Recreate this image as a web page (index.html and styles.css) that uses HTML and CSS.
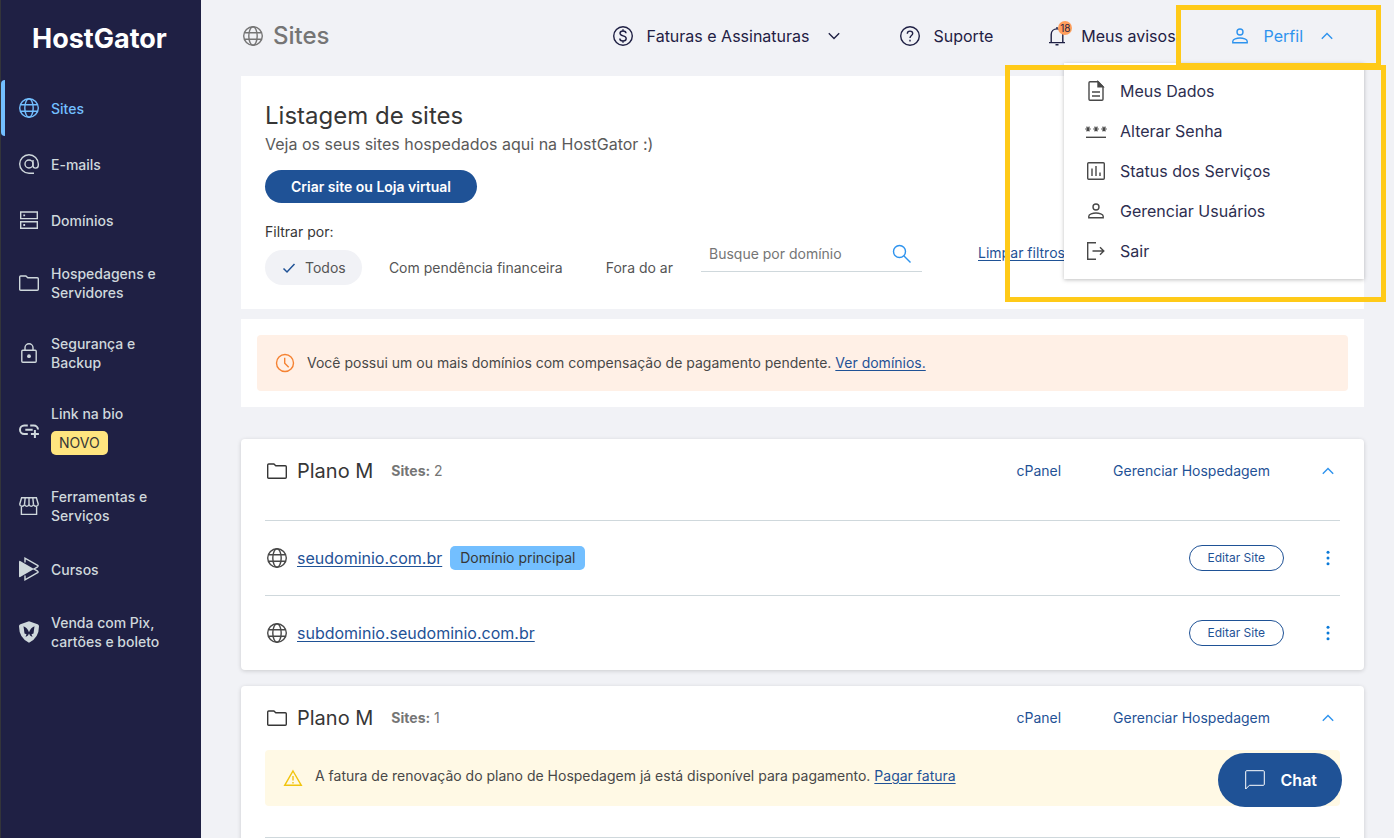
FILE: index.html
```html
<!DOCTYPE html>
<html lang="pt-BR">
<head>
<meta charset="utf-8">
<meta name="viewport" content="width=device-width, initial-scale=1">
<title>Sites - HostGator</title>
<link rel="stylesheet" href="styles.css">
</head>
<body>
<svg class="sprite" aria-hidden="true">
  <symbol id="globe" viewBox="0 0 24 24"><circle cx="12" cy="12" r="9.3"/><ellipse cx="12" cy="12" rx="4.2" ry="9.3"/><path d="M3.4 8.7h17.2M3.4 15.3h17.2"/></symbol>
  <symbol id="folder" viewBox="0 0 24 24"><path d="M3.7 5h5.2l1.900 1.800h9.500q1 0 1 1v10.500q0 .9-1 .9H3.700q-1 0-1-.9V5.900q0-.9 1-.9z"/></symbol>
  <symbol id="person" viewBox="0 0 24 24"><circle cx="12" cy="8" r="3"/><path d="M4.800 18.700v-1.400c0-2 4-3.300 7.200-3.300s7.200 1.300 7.200 3.300v1.400z"/></symbol>
  <symbol id="up" viewBox="0 0 24 24"><path d="M6.800 14.800 12 9.600l5.200 5.200"/></symbol>
  <symbol id="down" viewBox="0 0 24 24"><path d="M6.800 9.200l5.200 5.200 5.200-5.200"/></symbol>
  <symbol id="dots" viewBox="0 0 24 24"><g fill="currentColor" stroke="none"><circle cx="12" cy="6.200" r="1.500"/><circle cx="12" cy="12" r="1.500"/><circle cx="12" cy="17.800" r="1.500"/></g></symbol>
</svg>
<div class="app">
  <aside class="sidebar">
    <a class="logo" href="#">HostGator</a>
    <nav class="menu">
      <a class="menu-item active" href="#"><svg class="icon"><use href="#globe"/></svg><span>Sites</span></a>
      <a class="menu-item" href="#"><svg class="icon" viewBox="0 0 24 24"><circle cx="12" cy="12" r="4"/><path d="M16 8v5.500c0 1.700 1 2.600 2.500 2.600s2.800-1 2.800-2.800V12A9.300 9.300 0 1 0 12 21.300h5"/></svg><span>E-mails</span></a>
      <a class="menu-item" href="#"><svg class="icon" viewBox="0 0 24 24"><path d="M3.700 4h16.600v6.600H3.700zM3.700 13.700h16.600v6.600H3.700z"/><path d="M6.300 7.300h1.800M6.300 17h1.800" stroke-width="1.800"/></svg><span>Domínios</span></a>
      <a class="menu-item" href="#"><svg class="icon"><use href="#folder"/></svg><span>Hospedagens e Servidores</span></a>
      <a class="menu-item" href="#"><svg class="icon" viewBox="0 0 24 24"><rect x="4.800" y="9.300" width="14.400" height="12" rx="1"/><path d="M8 9V6.700a4 4 0 0 1 8 0V9"/><circle cx="12" cy="15.200" r="1.900" fill="currentColor" stroke="none"/></svg><span>Segurança e Backup</span></a>
      <a class="menu-item" href="#"><svg class="icon" viewBox="0 0 24 24"><path d="M10.800 7.500H7.200a4.200 4.200 0 0 0 0 8.400h3.600M13.200 7.500h3.600a4.200 4.200 0 0 1 4.200 4M8.300 11.700h7.400M17.900 11.900v8M13.900 15.900h8" stroke-width="2"/></svg><span class="stack">Link na bio <b class="new">NOVO</b></span></a>
      <a class="menu-item" href="#"><svg class="icon" viewBox="0 0 24 24"><path d="M4.400 12v8.400h15.200V12M4.600 3.800h14.800l1.800 6.200c.2 2.600-3.600 3.300-4.700.4-.8 2.600-3.900 2.600-4.500 0-.6 2.600-3.700 2.600-4.500 0-1.100 2.900-4.900 2.200-4.700-.4zM8.200 3.800l-.7 6.600M12 3.800v6.600M15.800 3.800l.7 6.600"/></svg><span>Ferramentas e Serviços</span></a>
      <a class="menu-item" href="#"><svg class="icon" viewBox="0 0 24 24"><path d="M2 4.500q.2-1 1.200-.5L17 12 3.200 20q-1 .5-1.200-.5z" fill="currentColor" stroke="none"/><path d="M8 5.400V1.200l12.600 7.200q1 .7 0 1.400L17 12l3.600 2.200q1 .7 0 1.400L8 22.800v-4.200"/></svg><span>Cursos</span></a>
      <a class="menu-item" href="#"><svg class="icon" viewBox="0 0 24 24"><path d="M12 1.200 20.600 4.300Q22 4.800 22 6.300 22 18 12 22.800 2 18 2 6.300 2 4.800 3.400 4.300z" fill="currentColor" stroke="none"/><path class="moth" d="M6.500 6.300Q10.500 8 12 12.200 13.500 8 17.500 6.300L16.500 13.500 14.500 14.300 15.500 17 13 15.500 12 13.500 11 15.500 8.500 17 9.500 14.300 7.500 13.500z"/></svg><span>Venda com Pix, cartões e boleto</span></a>
    </nav>
  </aside>

  <main class="main">
    <header class="topbar">
      <h1 class="page-title"><svg class="icon"><use href="#globe"/></svg>Sites</h1>
      <nav class="topnav">
        <button class="top-item" type="button"><svg class="icon" viewBox="0 0 24 24"><circle cx="12" cy="12" r="9.300"/><path d="M15 9.200c0-1.300-1.200-2.200-3-2.200s-3 .9-3 2.300c0 3.400 6.200 1.800 6.200 5.200 0 1.500-1.400 2.500-3.200 2.500s-3.200-1-3.200-2.500M12 5.300V7M12 17v1.700"/></svg>Faturas e Assinaturas<svg class="icon"><use href="#down"/></svg></button>
        <a class="top-item" href="#"><svg class="icon" viewBox="0 0 24 24"><circle cx="12" cy="12" r="9.300"/><path d="M9.300 9.800c0-1.700 1.100-2.700 2.700-2.700s2.700 1 2.700 2.500c0 2-2.700 2-2.700 4.400"/><path d="M12 15.700v1.700"/></svg>Suporte</a>
        <a class="top-item" href="#"><span class="bell"><svg class="icon" viewBox="0 0 24 24"><path d="M4 18.600h16M6.200 18.500V10.500c0-3.300 2.500-5.600 5.800-5.600s5.800 2.300 5.800 5.600v8M12 4.800V3M10.500 20.800h3"/></svg><span class="count">18</span></span>Meus avisos</a>
        <button class="top-item profile" type="button" aria-expanded="true"><svg class="icon"><use href="#person"/></svg>Perfil<svg class="icon"><use href="#up"/></svg></button>
      </nav>
      <div class="dropdown">
        <a href="#"><svg class="icon" viewBox="0 0 24 24"><path d="M14 2.700H6q-1 0-1 1v16.600q0 1 1 1h12q1 0 1-1V7.700zM8 13h8M8 17h8"/><path d="M14 2.700v5h5z" fill="currentColor"/></svg>Meus Dados</a>
        <a href="#"><svg class="icon" viewBox="0 0 24 24"><path d="M2 18.300h20"/><path stroke-width="1.100" d="M1.200 10h5.600M9.200 10h5.600M17.200 10h5.600M2.600 7.600l2.800 4.800M5.400 7.600l-2.800 4.800M10.600 7.600l2.800 4.800M13.400 7.600l-2.800 4.800M18.600 7.600l2.800 4.800M21.400 7.600l-2.800 4.800"/></svg>Alterar Senha</a>
        <a href="#"><svg class="icon" viewBox="0 0 24 24"><rect x="3.700" y="3.700" width="16.600" height="16.600" rx="1"/><path d="M8 9.500V17M12 7v10M16 13.500V17"/></svg>Status dos Serviços</a>
        <a href="#"><svg class="icon"><use href="#person"/></svg>Gerenciar Usuários</a>
        <a href="#"><svg class="icon" viewBox="0 0 24 24"><path d="M12 3.700H3.700v16.600H12M8.500 12h11.200M16 8.200l3.800 3.800-3.800 3.800"/></svg>Sair</a>
      </div>
    </header>

    <section class="panel intro">
      <h2>Listagem de sites</h2>
      <p class="lead">Veja os seus sites hospedados aqui na HostGator :)</p>
      <button class="primary" type="button">Criar site ou Loja virtual</button>
      <div class="filters">
        <div class="filter-group">
          <p>Filtrar por:</p>
          <div class="chips">
            <button class="chip selected" type="button"><svg class="check" viewBox="0 0 16 16"><path d="M2.500 8.500 6 12l7.500-8"/></svg>Todos</button>
            <button class="chip" type="button">Com pendência financeira</button>
            <button class="chip" type="button">Fora do ar</button>
          </div>
        </div>
        <label class="search"><input type="text" aria-label="Busque por domínio" placeholder="Busque por domínio"><svg class="icon" viewBox="0 0 24 24"><circle cx="9.500" cy="9.500" r="6"/><path d="M14 14l6.500 6.500"/></svg></label>
        <a class="clear" href="#">Limpar filtros</a>
      </div>
    </section>

    <section class="panel notice">
      <div class="alert pending"><svg class="icon" viewBox="0 0 24 24"><circle cx="12" cy="12" r="8.500"/><path d="M11.700 6.800v5.400l4 4"/></svg><p>Você possui um ou mais domínios com compensação de pagamento pendente. <a href="#">Ver domínios.</a></p></div>
    </section>

    <section class="card">
      <header class="plan">
        <h3><svg class="icon"><use href="#folder"/></svg>Plano M</h3>
        <p><b>Sites:</b> 2</p>
        <a class="first-link" href="#">cPanel</a>
        <a href="#">Gerenciar Hospedagem</a>
        <button class="icon-button" type="button" aria-label="Recolher"><svg class="icon"><use href="#up"/></svg></button>
      </header>
      <ul class="sites">
        <li><svg class="icon"><use href="#globe"/></svg><a href="#">seudominio.com.br</a><span class="tag">Domínio principal</span><button class="edit" type="button">Editar Site</button><button class="icon-button more" type="button" aria-label="Mais opções"><svg class="icon"><use href="#dots"/></svg></button></li>
        <li><svg class="icon"><use href="#globe"/></svg><a href="#">subdominio.seudominio.com.br</a><button class="edit" type="button">Editar Site</button><button class="icon-button more" type="button" aria-label="Mais opções"><svg class="icon"><use href="#dots"/></svg></button></li>
      </ul>
    </section>

    <section class="card">
      <header class="plan">
        <h3><svg class="icon"><use href="#folder"/></svg>Plano M</h3>
        <p><b>Sites:</b> 1</p>
        <a class="first-link" href="#">cPanel</a>
        <a href="#">Gerenciar Hospedagem</a>
        <button class="icon-button" type="button" aria-label="Recolher"><svg class="icon"><use href="#up"/></svg></button>
      </header>
      <div class="alert invoice"><svg class="icon" viewBox="0 0 24 24"><path d="M12 5 20.300 19.300H3.700zM12 10v4.500M12 16v1.500"/></svg><p>A fatura de renovação do plano de Hospedagem já está disponível para pagamento. <a href="#">Pagar fatura</a></p></div>
      <ul class="sites after-alert"></ul>
    </section>
  </main>
</div>
<button class="chat" type="button"><svg class="icon" viewBox="0 0 24 24"><path d="M2.700 21V3.700q0-1 1-1h16.600q1 0 1 1v12.600q0 1-1 1H6.400z"/></svg>Chat</button>
<div class="highlight highlight-profile"></div>
<div class="highlight highlight-menu"></div>
</body>
</html>
```
FILE: styles.css
```css
* { box-sizing: border-box; }
body {
  margin: 0;
  font-family: Inter, "Liberation Sans", sans-serif;
  font-size: 14px;
  line-height: 20px;
  color: #363636;
  background: #f1f2f6;
}
h1, h2, h3, p, ul { margin: 0; padding: 0; font-weight: 400; }
ul { list-style: none; }
a { color: #1f5296; text-underline-offset: 2px; }
button { font: inherit; color: inherit; background: none; border: 0; padding: 0; cursor: pointer; }
.sprite { position: absolute; width: 0; height: 0; }
.icon { width: 24px; height: 24px; flex: none; display: block; fill: none; stroke: currentColor; stroke-width: 1.4; }

.app { display: flex; height: 100vh; }

/* Sidebar */
.sidebar { flex: none; width: 201px; background: #1f2044; border-left: 1px solid #33343a; }
.logo {
  display: flex; align-items: center; height: 80px; padding: 0 0 2px 31px;
  color: #fff; font-size: 27px; font-weight: 700; text-decoration: none;
}
.menu-item {
  display: flex; align-items: center; gap: 10px; min-height: 56px; padding: 16px 30px 16px 16px;
  color: #cfd8dc; font-weight: 500; line-height: 19px; text-decoration: none;
}
.menu-item.active { color: #73bfff; padding-left: 12px; border-left: 4px solid #73bfff; border-radius: 4px 0 0 4px; }
.stack { display: flex; flex-direction: column; align-items: flex-start; gap: 8px; }
.new { padding: 0 8px; border-radius: 5px; background: #ffe57f; color: #363636; font-weight: 400; line-height: 24px; }
.moth { fill: #1f2044; stroke: none; }

/* Top bar */
.main { flex: 1; min-width: 0; padding: 0 30px 0 40px; overflow: hidden; }
.topbar { position: relative; display: flex; align-items: center; height: 76px; padding: 0 25px 4px 0; }
.page-title { display: flex; align-items: center; gap: 8px; font-size: 24px; font-weight: 500; color: #757575; }
.topnav { display: flex; gap: 52px; margin-left: auto; }
.top-item { display: flex; align-items: center; gap: 12px; font-size: 16px; color: #1f2044; text-decoration: none; white-space: nowrap; }
.profile { color: #2e93ee; }
.bell { position: relative; }
.count {
  position: absolute; left: 13px; top: -3px; width: 14px; height: 14px; border-radius: 50%;
  background: #ff9e5c; color: #1f2044; font-size: 10px; line-height: 14px; text-align: center;
}
.dropdown {
  position: absolute; z-index: 2; top: 63px; right: 0; width: 300px; padding: 8px 20px;
  background: #fff; box-shadow: 0 1px 4px rgba(0, 0, 0, .25);
}
.dropdown a { display: flex; align-items: center; gap: 12px; height: 40px; color: #2d2e50; font-size: 16px; text-decoration: none; }
.dropdown .icon { color: #484848; }

/* Panels */
.panel { background: #fff; }
.intro { padding: 24px; }
.intro h2 { font-size: 24px; line-height: 32px; }
.lead { font-size: 16px; line-height: 24px; color: #5a5a5a; }
.primary {
  margin-top: 14px; height: 33px; padding: 0 26px; border-radius: 17px;
  background: #1f5296; color: #fff; font-weight: 600;
}
.filters { display: flex; align-items: flex-start; margin-top: 20px; }
.filter-group { min-width: 424px; }
.filter-group p { line-height: 18px; }
.chips { display: flex; justify-content: space-between; gap: 8px; margin-top: 9px; }
.chip { display: flex; align-items: center; gap: 8px; height: 35px; padding: 0 16px; border-radius: 18px; color: #555; white-space: nowrap; }
.chip.selected { background: #f1f2f6; }
.check { width: 16px; height: 16px; fill: none; stroke: #1f5296; stroke-width: 1.5; }
.search { display: flex; align-items: center; width: 221px; height: 36px; margin: 13px 0 0 12px; padding: 0 8px; border-bottom: 1px solid #cfd8dc; color: #2e93ee; }
.search input { flex: 1; min-width: 0; border: 0; padding: 0; outline: 0; background: none; font: inherit; }
.search input::placeholder { color: #757575; opacity: 1; }
.clear { margin: 20px 0 0 56px; }
.notice { margin-top: 10px; padding: 16px; }
.alert { display: flex; align-items: center; height: 56px; padding: 0 16px; border-radius: 4px; }
.alert p { color: #484848; }
.pending { gap: 10px; background: #fff0e6; }
.pending .icon { color: #f58232; }
.invoice { gap: 10px; background: #fff9e5; }
.invoice .icon { color: #f1c40f; }
.invoice p { padding-bottom: 4px; }

/* Plan cards */
.card { margin-top: 16px; padding: 0 24px; border-radius: 4px; background: #fff; box-shadow: 0 1px 4px rgba(0, 0, 0, .16); }
.notice + .card { margin-top: 32px; }
.plan { display: flex; align-items: center; height: 64px; }
.plan h3 { display: flex; align-items: center; gap: 8px; font-size: 20px; }
.plan p { margin-left: 18px; color: #757575; }
.plan a { margin-right: 46px; text-decoration: none; }
.plan .first-link { margin: 0 52px 0 auto; }
.icon-button { color: #2e93ee; }
.sites { margin-top: 17px; }
.sites li { display: flex; align-items: center; gap: 8px; height: 75px; border-top: 1px solid #cfd8dc; font-size: 16px; }
.sites .icon { color: #484848; }
.sites .more .icon { color: #0b7ad8; }
.tag { padding: 0 10px; border-radius: 5px; background: #73bfff; color: #363636; font-size: 14px; line-height: 24px; }
.edit { height: 26px; margin: 0 24px 0 auto; padding: 0 18px; border: 1px solid #1f5296; border-radius: 13px; color: #1f5296; font-size: 12px; }
.after-alert { margin-top: 31px; height: 75px; border-top: 1px solid #cfd8dc; }

/* Floating layer */
.chat {
  position: fixed; right: 52px; bottom: 31px; display: flex; align-items: center; gap: 14px;
  height: 54px; padding: 0 25px; border-radius: 27px; background: #1f5296; color: #fff; font-size: 16px; font-weight: 600;
}
.chat .icon { stroke-width: 1; }
.highlight { position: fixed; z-index: 3; border: 5px solid #ffca18; pointer-events: none; }
.highlight-profile { top: 5px; right: 13px; width: 205px; height: 63px; }
.highlight-menu { top: 65px; right: 8px; width: 381px; height: 237px; }
```
